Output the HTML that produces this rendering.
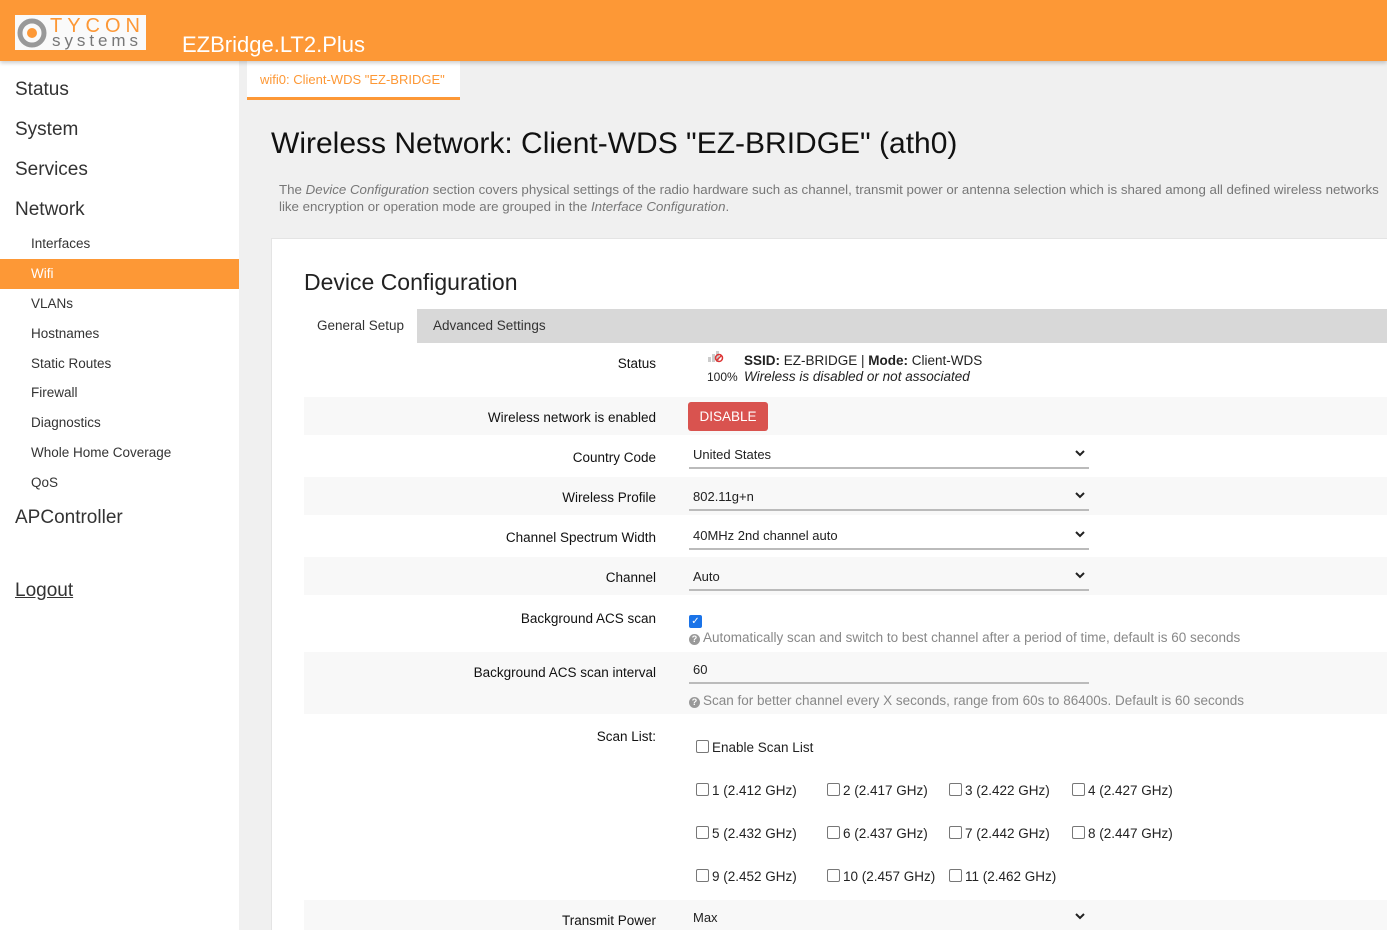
<!DOCTYPE html>
<html style="overflow:hidden;width:1387px;height:930px"><head><meta charset="utf-8"><style>
*{box-sizing:border-box;margin:0;padding:0}
body{width:1387px;height:930px;overflow:hidden;font-family:"Liberation Sans",sans-serif;background:#f0f0f0;position:relative;color:#222}
.hdr{position:absolute;left:0;top:0;width:1387px;height:61px;background:#fd9836;box-shadow:0 2px 4px rgba(0,0,0,.2);z-index:2}
.logo{position:absolute;left:15px;top:15px;width:131px;height:35px;background:#fafafa}
.title{position:absolute;left:182px;top:32px;color:#fff;font-size:22px}
.side{position:absolute;left:0;top:61px;width:239px;height:869px;background:#fff}
.side div{position:absolute;left:0;width:239px;padding-left:15px}
.big{font-size:19px;color:#333}
.sm{font-size:13.5px;color:#333;padding-left:31px!important;height:30px;line-height:30px}
.act{background:#fd9836;color:#fff!important}
.main{position:absolute;left:239px;top:61px;width:1148px;height:869px;overflow:hidden}
.crumb{position:absolute;left:8px;top:0;width:213px;height:39px;background:#fff;border-bottom:3px solid #fd9836;color:#fd9836;font-size:13px;padding:11px 0 0 13px}
h1{position:absolute;left:32px;top:66px;font-weight:normal;font-size:30px;color:#111}
.desc{position:absolute;left:40px;top:120px;font-size:13.3px;color:#777;line-height:17px;white-space:nowrap}
.card{position:absolute;left:32px;top:177px;width:1120px;height:700px;background:#fff;border:1px solid #e4e4e4}
h2{position:absolute;left:32px;top:30px;font-weight:normal;font-size:23px;color:#222}
.tabs{position:absolute;left:32px;top:70px;width:1090px;height:34px;background:#d8d8d8}
.tab{position:absolute;top:0;height:34px;line-height:34px;font-size:13.5px;color:#333}
.row{position:absolute;left:32px;width:1090px}
.lab{position:absolute;right:738px;font-size:13.5px;color:#111;text-align:right;white-space:nowrap}
.val{position:absolute;left:385px;font-size:13.5px}
.g{background:#f8f8f8}
.sel{position:absolute;left:385px;width:400px;height:30px;border-bottom:2px solid #bbb;font-size:13px;padding:8px 0 0 4px}
.sel svg{position:absolute;right:4px;top:11px}
.cb{display:inline-block;width:13px;height:13px;border:1px solid #777;border-radius:2px;vertical-align:-1px;margin-right:3px;background:#fff}
.hint{color:#888;font-size:13.5px}
.q{display:inline-block;width:11px;height:11px;border-radius:50%;background:#999;color:#fff;font-size:9px;line-height:11px;text-align:center;font-weight:bold;vertical-align:0;margin-right:3px}
.ch{position:absolute;font-size:13.5px;color:#222}
</style></head><body>
<div class="hdr"><div class="logo">
<svg width="131" height="35"><circle cx="17" cy="18" r="12" fill="none" stroke="#999" stroke-width="5"/><circle cx="17" cy="18" r="5" fill="#fd9836"/>
<text x="35" y="17" font-family="Liberation Sans" font-size="20" fill="#fd9836" textLength="90">TYCON</text><text x="37" y="31" font-family="Liberation Sans" font-size="17" fill="#777" textLength="86">systems</text></svg></div>
<div class="title">EZBridge.LT2.Plus</div></div>
<div class="side">
<div class="big" style="top:18px">Status</div>
<div class="big" style="top:58px">System</div>
<div class="big" style="top:98px">Services</div>
<div class="big" style="top:138px">Network</div>
<div class="sm" style="top:168px">Interfaces</div>
<div class="sm act" style="top:198px">Wifi</div>
<div class="sm" style="top:228px">VLANs</div>
<div class="sm" style="top:258px">Hostnames</div>
<div class="sm" style="top:288px">Static Routes</div>
<div class="sm" style="top:317px">Firewall</div>
<div class="sm" style="top:347px">Diagnostics</div>
<div class="sm" style="top:377px">Whole Home Coverage</div>
<div class="sm" style="top:407px">QoS</div>
<div class="big" style="top:446px">APController</div>
<div class="big" style="top:519px;text-decoration:underline">Logout</div>
</div>
<div class="main">
<div class="crumb">wifi0: Client-WDS "EZ-BRIDGE"</div>
<h1>Wireless Network: Client-WDS "EZ-BRIDGE" (ath0)</h1>
<div class="desc">The <i>Device Configuration</i> section covers physical settings of the radio hardware such as channel, transmit power or antenna selection which is shared among all defined wireless networks<br>like encryption or operation mode are grouped in the <i>Interface Configuration</i>.</div>
<div class="card">
<h2>Device Configuration</h2>
<div class="tabs"><div class="tab" style="left:0;width:113px;background:#fff;padding-left:13px">General Setup</div><div class="tab" style="left:129px">Advanced Settings</div></div>
<div class="row" style="top:104px;height:54px"><div class="lab" style="top:13px">Status</div>
<svg class="val" style="left:403px;top:6px" width="18" height="14"><rect x="1" y="8" width="3" height="5" fill="#ccc"/><rect x="5" y="5" width="3" height="8" fill="#ccc"/><rect x="9" y="2" width="3" height="11" fill="#ccc"/><circle cx="12" cy="9" r="3.5" fill="none" stroke="#d33" stroke-width="1.5"/><line x1="10" y1="11" x2="14" y2="7" stroke="#d33" stroke-width="1.5"/></svg>
<div class="val" style="left:403px;top:27px;font-size:12px">100%</div>
<div class="val" style="left:440px;top:10px;line-height:16px"><b>SSID:</b> EZ-BRIDGE | <b>Mode:</b> Client-WDS<br><i>Wireless is disabled or not associated</i></div></div>
<div class="row g" style="top:158px;height:38px"><div class="lab" style="top:13px">Wireless network is enabled</div>
<div class="val" style="left:384px;top:5px;background:#d9534f;color:#fff;border-radius:3px;width:80px;height:29px;line-height:29px;text-align:center">DISABLE</div></div>
<div class="row" style="top:196px;height:42px"><div class="lab" style="top:15px">Country Code</div><div class="sel" style="top:4px">United States<svg width="10" height="7"><path d="M1 1l4 4 4-4" stroke="#222" stroke-width="2" fill="none"/></svg></div></div>
<div class="row g" style="top:238px;height:38px"><div class="lab" style="top:13px">Wireless Profile</div><div class="sel" style="top:4px">802.11g+n<svg width="10" height="7"><path d="M1 1l4 4 4-4" stroke="#222" stroke-width="2" fill="none"/></svg></div></div>
<div class="row" style="top:276px;height:42px"><div class="lab" style="top:15px">Channel Spectrum Width</div><div class="sel" style="top:5px">40MHz 2nd channel auto<svg width="10" height="7"><path d="M1 1l4 4 4-4" stroke="#222" stroke-width="2" fill="none"/></svg></div></div>
<div class="row g" style="top:318px;height:38px"><div class="lab" style="top:13px">Channel</div><div class="sel" style="top:4px">Auto<svg width="10" height="7"><path d="M1 1l4 4 4-4" stroke="#222" stroke-width="2" fill="none"/></svg></div></div>
<div class="row" style="top:356px;height:57px"><div class="lab" style="top:16px">Background ACS scan</div>
<div class="val" style="top:16px"><span class="cb" style="background:#1a73e8;border-color:#1a73e8;color:#fff;font-size:10px;line-height:11px;text-align:center">✓</span></div>
<div class="val hint" style="top:35px"><span class="q">?</span>Automatically scan and switch to best channel after a period of time, default is 60 seconds</div></div>
<div class="row g" style="top:413px;height:62px"><div class="lab" style="top:13px">Background ACS scan interval</div>
<div class="sel" style="top:2px;width:400px;font-size:13px">60</div>
<div class="val hint" style="top:41px"><span class="q">?</span>Scan for better channel every X seconds, range from 60s to 86400s. Default is 60 seconds</div></div>
<div class="row" style="top:475px;height:186px"><div class="lab" style="top:15px">Scan List:</div>
<div class="ch" style="left:392px;top:26px"><span class="cb"></span>Enable Scan List</div>
<div class="ch" style="left:392px;top:69px"><span class="cb"></span>1 (2.412 GHz)</div>
<div class="ch" style="left:523px;top:69px"><span class="cb"></span>2 (2.417 GHz)</div>
<div class="ch" style="left:645px;top:69px"><span class="cb"></span>3 (2.422 GHz)</div>
<div class="ch" style="left:768px;top:69px"><span class="cb"></span>4 (2.427 GHz)</div>
<div class="ch" style="left:392px;top:112px"><span class="cb"></span>5 (2.432 GHz)</div>
<div class="ch" style="left:523px;top:112px"><span class="cb"></span>6 (2.437 GHz)</div>
<div class="ch" style="left:645px;top:112px"><span class="cb"></span>7 (2.442 GHz)</div>
<div class="ch" style="left:768px;top:112px"><span class="cb"></span>8 (2.447 GHz)</div>
<div class="ch" style="left:392px;top:155px"><span class="cb"></span>9 (2.452 GHz)</div>
<div class="ch" style="left:523px;top:155px"><span class="cb"></span>10 (2.457 GHz)</div>
<div class="ch" style="left:645px;top:155px"><span class="cb"></span>11 (2.462 GHz)</div></div>
<div class="row g" style="top:661px;height:40px"><div class="lab" style="top:13px">Transmit Power</div><div class="sel" style="top:2px">Max<svg width="10" height="7"><path d="M1 1l4 4 4-4" stroke="#222" stroke-width="2" fill="none"/></svg></div></div>
</div></div>
</body></html>
